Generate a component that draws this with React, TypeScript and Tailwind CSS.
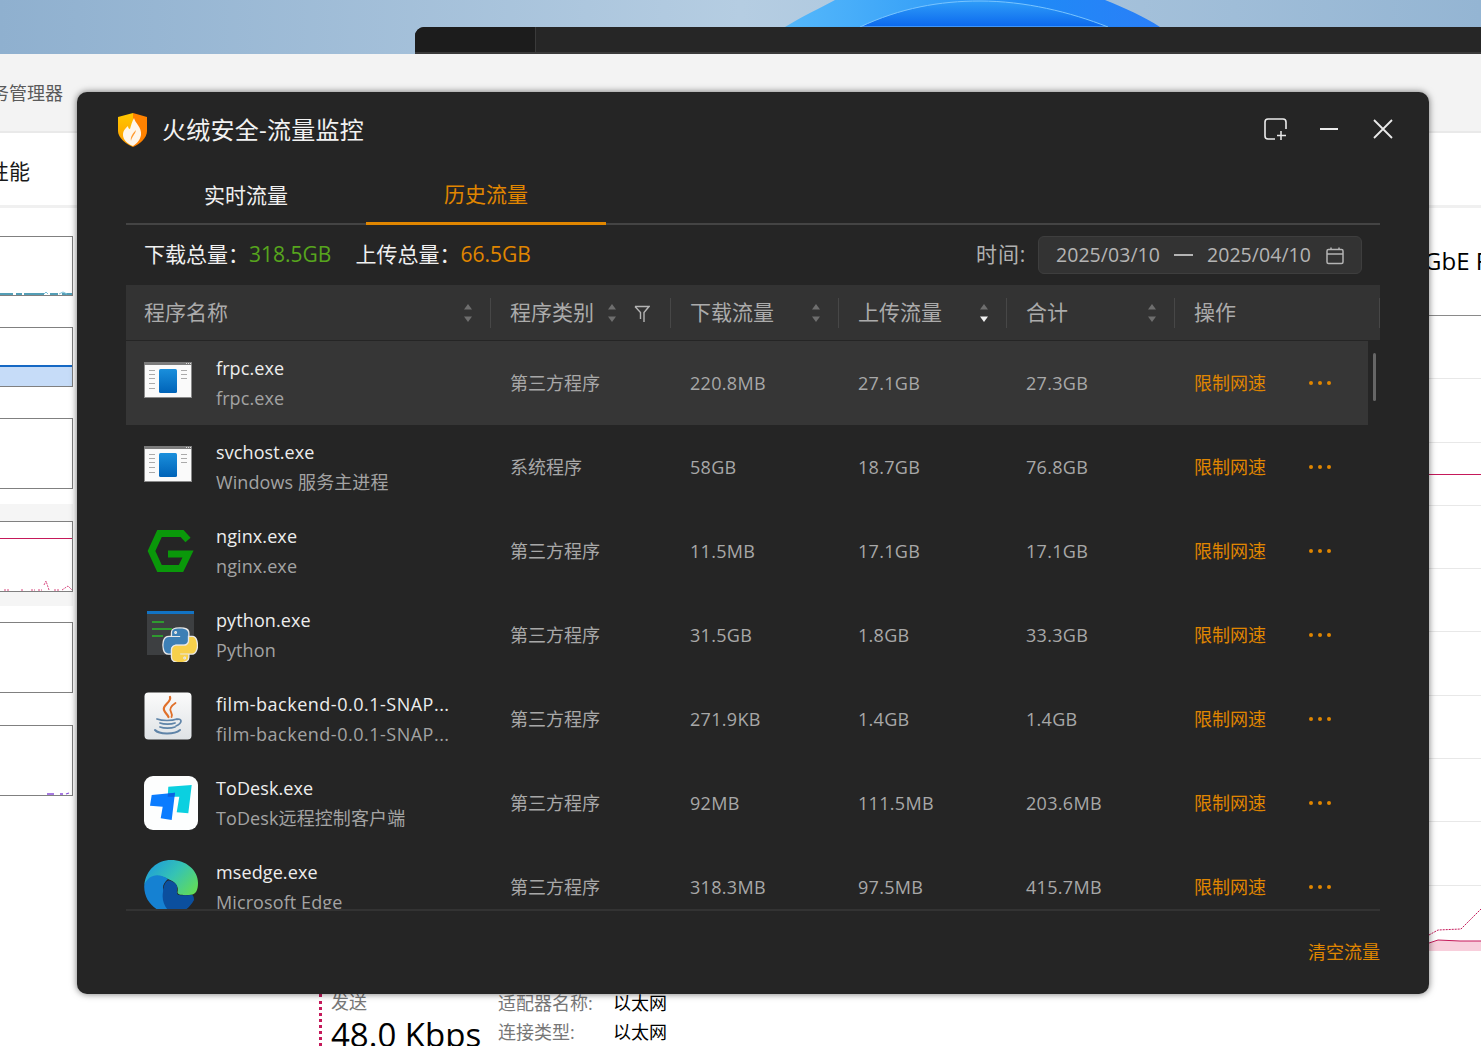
import { useId } from "react";

const FONT = { fontFamily: '"Open Sans", "Noto Sans CJK SC", sans-serif' };

type Row = {
  name: string;
  desc: string;
  kind: string;
  down: string;
  up: string;
  total: string;
  icon: "win" | "nginx" | "python" | "java" | "todesk" | "edge";
};

const ROWS: Row[] = [
  { name: "frpc.exe", desc: "frpc.exe", kind: "第三方程序", down: "220.8MB", up: "27.1GB", total: "27.3GB", icon: "win" },
  { name: "svchost.exe", desc: "Windows 服务主进程", kind: "系统程序", down: "58GB", up: "18.7GB", total: "76.8GB", icon: "win" },
  { name: "nginx.exe", desc: "nginx.exe", kind: "第三方程序", down: "11.5MB", up: "17.1GB", total: "17.1GB", icon: "nginx" },
  { name: "python.exe", desc: "Python", kind: "第三方程序", down: "31.5GB", up: "1.8GB", total: "33.3GB", icon: "python" },
  { name: "film-backend-0.0.1-SNAP...", desc: "film-backend-0.0.1-SNAP...", kind: "第三方程序", down: "271.9KB", up: "1.4GB", total: "1.4GB", icon: "java" },
  { name: "ToDesk.exe", desc: "ToDesk远程控制客户端", kind: "第三方程序", down: "92MB", up: "111.5MB", total: "203.6MB", icon: "todesk" },
  { name: "msedge.exe", desc: "Microsoft Edge", kind: "第三方程序", down: "318.3MB", up: "97.5MB", total: "415.7MB", icon: "edge" },
];

function AppIcon({ type }: { type: Row["icon"] }) {
  const id = useId();
  if (type === "win") {
    return (
      <svg width="54" height="54" viewBox="0 0 54 54">
        <rect x="0.5" y="6.5" width="47" height="35" fill="#fafafa" stroke="#8a8a8a" />
        <rect x="0" y="6" width="48" height="3" fill="#7c7c7c" />
        <rect x="42" y="7" width="1" height="1" fill="#ddd" />
        <rect x="44" y="7" width="1" height="1" fill="#ddd" />
        <rect x="46" y="7" width="1" height="1" fill="#ddd" />
        <defs>
          <linearGradient id={id} x1="0" y1="0" x2="0" y2="1">
            <stop offset="0" stopColor="#1a8fdc" />
            <stop offset="1" stopColor="#0063b8" />
          </linearGradient>
        </defs>
        <rect x="15" y="13" width="18" height="24" rx="1.5" fill={`url(#${id})`} />
        {[14, 18, 22, 27, 32].map((y) => (
          <rect key={y} x="5" y={y} width="6" height="1" fill="#aaa" />
        ))}
        {[14, 18, 22].map((y) => (
          <rect key={y} x="37" y={y} width="6" height="1" fill="#aaa" />
        ))}
      </svg>
    );
  }
  if (type === "nginx") {
    return (
      <svg width="54" height="54" viewBox="0 0 54 54">
        <path
          d="M44 16 L38 9.5 H15.5 L7.5 27 L15.5 44.5 H37 L44 30 H24"
          fill="none"
          stroke="#0a980a"
          strokeWidth="7"
        />
      </svg>
    );
  }
  if (type === "python") {
    return (
      <svg width="54" height="54" viewBox="0 0 54 54">
        <rect x="3" y="3" width="47" height="44" fill="#3d3f41" />
        <rect x="3" y="3" width="47" height="3" fill="#1273c4" />
        <rect x="8" y="13" width="12" height="2" fill="#2f9a2f" />
        <rect x="8" y="20" width="20" height="2" fill="#2f9a2f" />
        <rect x="8" y="27" width="11" height="2" fill="#2f9a2f" />
        <g transform="translate(19.5 20.5) scale(0.3)">
          <path
            d="M54.9 0C50.3 0 46 .4 42.1 1.1 30.8 3.1 28.7 7.3 28.7 15v10.2h26.8v3.4H18.6c-7.8 0-14.6 4.7-16.7 13.6-2.5 10.2-2.6 16.6 0 27.3 1.9 7.9 6.5 13.6 14.2 13.6h9.2V71c0-8.8 7.7-16.7 16.8-16.7h26.8c7.4 0 13.4-6.1 13.4-13.6V15.2c0-7.3-6.1-12.7-13.4-13.9C64.3.3 59.5 0 54.9 0Zm-14.5 8.2c2.8 0 5 2.3 5 5.1s-2.2 5.1-5 5.1-5-2.3-5-5.1 2.2-5.1 5-5.1Z"
            fill="#3d7fb5"
            stroke="#e8e8e8"
            strokeWidth="9"
            paintOrder="stroke"
          />
          <path
            d="M85.6 28.7v11.9c0 9.2-7.8 17-16.7 17H42.1c-7.3 0-13.4 6.3-13.4 13.6v25.5c0 7.3 6.3 11.5 13.4 13.6 8.5 2.5 16.6 2.9 26.8 0 6.7-2 13.4-5.9 13.4-13.6V86.5H55.5v-3.4h40.2c7.8 0 10.7-5.4 13.4-13.6 2.8-8.4 2.7-16.5 0-27.3-1.9-7.8-5.6-13.6-13.4-13.6Zm-15.1 64.6c2.8 0 5 2.3 5 5.1s-2.2 5.1-5 5.1-5-2.3-5-5.1 2.2-5.1 5-5.1Z"
            fill="#f7d04b"
            stroke="#e8e8e8"
            strokeWidth="9"
            paintOrder="stroke"
          />
        </g>
      </svg>
    );
  }
  if (type === "java") {
    return (
      <svg width="54" height="54" viewBox="0 0 54 54">
        <defs>
          <linearGradient id={id} x1="0" y1="0" x2="0" y2="1">
            <stop offset="0" stopColor="#fbfbfb" />
            <stop offset="1" stopColor="#dfe3e6" />
          </linearGradient>
        </defs>
        <rect x="0.5" y="0.5" width="47" height="47" rx="4" fill={`url(#${id})`} />
        <g fill="none" stroke="#e0702a" strokeLinecap="round">
          <path d="M26 5 C28 10 18 13 20 18 C21 21 23 22 24.5 25" strokeWidth="2.2" />
          <path d="M31.5 11 C27 14 25 17 27 20 C28 22 28 24 27.5 25" strokeWidth="1.8" />
        </g>
        <g fill="none" stroke="#5f84a8" strokeWidth="1.7" strokeLinecap="round">
          <path d="M13 27 C18 29 28 29 33 27" />
          <path d="M16 31 C20 32.5 27 32.5 31 31" />
          <path d="M16 35 C20 36.5 27 36.5 31 35" />
          <path d="M33 27.5 C38 26 39 31 32 34" />
          <path d="M11 38 C15 42.5 30 43 36 38" strokeWidth="2" />
        </g>
      </svg>
    );
  }
  if (type === "todesk") {
    return (
      <svg width="54" height="54" viewBox="0 0 54 54">
        <rect width="54" height="54" rx="9" fill="#fdfefe" />
        <path d="M24.3 10.7 L47.7 9 L44.3 37.3 L32.7 36.3 L35.3 20.7 L23.7 20.7Z" fill="#0bd0e0" />
        <path d="M7.7 19 L31 16.7 L27.7 44 L16.7 42.3 L18.7 30.7 L6 29.7Z" fill="#0a7cff" />
        <path d="M24 17.4 L31 16.7 L30.3 20.7 L23.7 20.7Z" fill="#0a62e0" />
      </svg>
    );
  }
  return (
    <svg width="54" height="54" viewBox="0 0 54 54">
      <defs>
        <linearGradient id={id} x1="0" y1="0.2" x2="1" y2="0.8">
          <stop offset="0" stopColor="#1d9bdc" />
          <stop offset="0.5" stopColor="#35c3b4" />
          <stop offset="1" stopColor="#62dc58" />
        </linearGradient>
      </defs>
      <path d="M0.3 25 C2 10 13 0 27 0 C42 0 54 10 54 23 C54 30 52 34 47.7 34.7 C41 35.5 33 35.5 33.5 32 C35 27 32 22 24 19 C18 16 8 13 0.3 25Z" fill={`url(#${id})`} />
      <path d="M0.3 25 C4 15 14 12 24 19 C21 22 19 24 19 28 L26 49 C28 52 30 53 32 53.5 C15 56 -1 42 0.3 25Z" fill="#1581d2" />
      <path d="M24 20.5 C28 20.5 32 23 33 26 C33.5 30 32 33 34 34.7 C38 36 44 35 47.7 34.7 C49 35 50 36.5 50 40 C45 49 37 54 30 54 C23 52 17 42 19 32 C19.5 26 21 22 24 20.5Z" fill="#0b4f9e" />
    </svg>
  );
}

function Sort({ active }: { active?: boolean }) {
  return (
    <svg width="10" height="20" viewBox="0 0 10 20" className="shrink-0">
      <path d="M5 1 L9 6.5 H1Z" fill="#6e6e6e" />
      <path d="M5 19 L9 13.5 H1Z" fill={active ? "#f0f0f0" : "#6e6e6e"} />
    </svg>
  );
}

function HeadCell({
  label,
  first,
  active,
  filter,
  noSort,
}: {
  label: string;
  first?: boolean;
  active?: boolean;
  filter?: boolean;
  noSort?: boolean;
}) {
  return (
    <div className={`flex h-[30px] items-center border-r border-[#474747] ${first ? "pl-[18px]" : "pl-[19px]"}`}>
      <span className="mt-[-2px] text-[21px] leading-[30px] text-[#ababab]">{label}</span>
      <div className="ml-auto flex items-center">
        {!noSort && (
          <span className="mr-[17px]">
            <Sort active={active} />
          </span>
        )}
        {filter && (
          <svg width="16" height="18" viewBox="0 0 16 18" className="mr-[20px] mt-[3px]">
            <path d="M1 1.5 H15 L10 7.5 V17 M1 1.5 L6.5 7.5 V14" fill="none" stroke="#b4b4b4" strokeWidth="1.4" />
          </svg>
        )}
      </div>
    </div>
  );
}

function ChartBox({ h, children }: { h: string; children?: React.ReactNode }) {
  return <div className={`relative w-[73px] overflow-hidden border border-l-0 border-[#808080] bg-white ${h}`}>{children}</div>;
}

export default function App() {
  return (
    <div className="relative flex h-[1046px] w-[1481px] flex-col overflow-hidden bg-white" style={FONT}>
      {/* wallpaper */}
      <div className="relative h-[54px] shrink-0 overflow-hidden bg-gradient-to-r from-[#8fb0cf] via-[#b5cde2] to-[#94b5d3]">
        <svg width="1481" height="54" className="absolute left-0 top-0">
          <defs>
            <linearGradient id="swirl" x1="0" y1="0" x2="1" y2="0">
              <stop offset="0" stopColor="#55b8fb" />
              <stop offset="0.35" stopColor="#3aa3f8" />
              <stop offset="0.65" stopColor="#1f8af6" />
              <stop offset="1" stopColor="#2a7ff8" />
            </linearGradient>
            <linearGradient id="swirlIn" x1="0" y1="0" x2="0" y2="1">
              <stop offset="0" stopColor="#2f9df8" />
              <stop offset="1" stopColor="#0b68ee" />
            </linearGradient>
          </defs>
          <path d="M785 27 C805 15 820 8 835 0 H1105 C1125 8 1145 17 1160 27 V54 H785Z" fill="url(#swirl)" />
          <path d="M860 27 C900 8 940 1 980 1 C1025 1 1070 12 1108 27Z" fill="url(#swirlIn)" stroke="#78c4ff" strokeWidth="1" />
        </svg>
        <div className="absolute bottom-0 left-[415px] right-0 flex h-[27px] overflow-hidden rounded-tl-[9px] border-b-2 border-[#3a3a3a] bg-[#262626]">
          <div className="w-[120px] bg-[#1c1c1c]" />
          <div className="w-px bg-[#3a3a3a]" />
        </div>
      </div>

      {/* task manager window behind */}
      <div className="flex h-[79px] shrink-0 items-center border-b-2 border-[#e9e9e9] bg-[#f3f3f3]">
        <span className="ml-[-27px] mt-[2px] text-[18px] text-[#5a5a5a]">任务管理器</span>
      </div>
      <div className="flex h-[75px] shrink-0 items-center border-b-[3px] border-[#f0f0f0] bg-white">
        <span className="ml-[-12px] mt-[5px] text-[21px] text-[#1a1a1a]">性能</span>
      </div>

      <div className="flex min-h-0 flex-1">
        <div className="flex w-[73px] shrink-0 flex-col pt-[28px]">
          <ChartBox h="h-[60px]">
            <svg width="72" height="4" className="absolute bottom-0 left-0">
              <path d="M0 3 H13 M16 3 H22 M24 3 H44 M50 3 H58 M62 3 H72" fill="none" stroke="#1d7f9e" strokeWidth="1.5" />
              <path d="M44 3 L46 1 L48 3 M59 3 L63 1 L67 3" fill="none" stroke="#7cc0d8" strokeWidth="1" />
            </svg>
          </ChartBox>
          <div className="mt-[31px]">
            <ChartBox h="h-[60px]">
              <div className="absolute bottom-0 left-0 h-[21px] w-full border-t-2 border-[#1568c4] bg-[#c6dcf8]" />
            </ChartBox>
          </div>
          <div className="mt-[31px]">
            <ChartBox h="h-[71px]" />
          </div>
          <div className="mt-[15px] bg-[#f5f5f5] pb-[14px] pt-[17px]">
            <ChartBox h="h-[71px]">
              <div className="absolute left-0 top-[16px] h-px w-full bg-[#c5195a]" />
              <svg width="72" height="12" className="absolute bottom-0 left-0">
                <path d="M4 11 H9 M21 11 H24 M31 11 H35 M38 11 H42 M44 6 L46 2 L49 11 M54 11 H60 M62 11 L68 7 L72 11" fill="none" stroke="#d8487f" strokeWidth="1" strokeDasharray="2 1" />
              </svg>
            </ChartBox>
          </div>
          <div className="mt-[16px]">
            <ChartBox h="h-[71px]" />
          </div>
          <div className="mt-[32px]">
            <ChartBox h="h-[71px]">
              <svg width="72" height="10" className="absolute bottom-0 left-0">
                <path d="M47 9 H54 M60 9 H63 M66 9 L69 8 M74 9 L77 4 L80 9" fill="none" stroke="#8a4fd8" strokeWidth="1.3" />
              </svg>
            </ChartBox>
          </div>
        </div>

        <div className="flex min-w-0 flex-1 flex-col justify-end">
          <div className="ml-[246px] flex h-[52px] border-l-[3px] border-dotted border-[#c5195a] pl-[9px]">
            <div className="w-[167px]">
              <div className="text-[18px] leading-[17px] text-[#777]">发送</div>
              <div className="mt-[4px] whitespace-nowrap text-[33px] leading-[40px] text-black">48.0 Kbps</div>
            </div>
            <div className="w-[115px] text-[18px] leading-[29px] text-[#777]">
              <div className="mt-[-5px]">适配器名称:</div>
              <div>连接类型:</div>
            </div>
            <div className="text-[18px] leading-[29px] text-black">
              <div className="mt-[-5px]">以太网</div>
              <div>以太网</div>
            </div>
          </div>
        </div>

        <div className="flex w-[61px] shrink-0 flex-col overflow-hidden pt-[37px]">
          <div className="h-[32px] whitespace-nowrap pl-[4px] text-[24px] leading-[32px] text-black">GbE Family</div>
          <div className="relative mt-[38px] flex h-[635px] flex-col border-y border-[#8a8a8a]">
            {Array.from({ length: 10 }).map((_, i) => (
              <div key={i} className="flex-1 border-b border-[#e8e8e8] last:border-b-0" />
            ))}
            <svg width="61" height="635" className="absolute left-0 top-0">
              <path d="M9 158.5 H61" stroke="#c5195a" strokeWidth="1" />
              <path d="M9 627 L18 624 L40 625 H61 V635 H9Z" fill="#f8cfdc" />
              <path d="M9 627 L18 624 L40 625 H61" fill="none" stroke="#c5195a" strokeWidth="1" />
              <path d="M9 619 L18 614 L41 613 L61 593" fill="none" stroke="#c5195a" strokeWidth="1" strokeDasharray="2 1" />
            </svg>
          </div>
        </div>
      </div>

      {/* traffic monitor dialog */}
      <div className="absolute left-[77px] top-[92px] flex h-[902px] w-[1352px] flex-col rounded-[10px] bg-[#252525] shadow-[0_0_7px_rgba(0,0,0,0.55)]">
        <div className="flex h-[76px] shrink-0 items-center pl-[41px] pr-[34px]">
          <svg width="30" height="34" viewBox="0 0 30 34">
            <defs>
              <linearGradient id="shieldL" x1="0" y1="0" x2="0" y2="1">
                <stop offset="0" stopColor="#ffc800" />
                <stop offset="1" stopColor="#ff9a00" />
              </linearGradient>
            </defs>
            <path d="M15 0 L0 4 V18 C0 25 8 31 15 34Z" fill="url(#shieldL)" />
            <path d="M15 0 L29 4 V18 C29 25 22 31 15 34Z" fill="#ff8200" />
            <path d="M16 5 C17 10 24 14 23 22 C22 28 18 31 15 33 C10 31 5 27 5 22 C5 17 8 15 10 13 C10 15 11 16 12 16 C13 12 14 9 16 5Z" fill="#fff6ea" />
            <path d="M18 17 C17 22 14 23 13 28 C12 24 15 20 18 17Z" fill="#ff9a30" />
          </svg>
          <h1 className="ml-[14px] text-[24px] font-normal leading-none tracking-[0.25px] text-[#f2f2f2]">火绒安全-流量监控</h1>
          <div className="ml-auto flex items-center gap-[30px]">
            <svg width="24" height="24" viewBox="0 0 24 24" fill="none" stroke="#eaeaea" strokeWidth="1.6" className="mt-[-2px]">
              <path d="M12 22 H5 C3 22 2 21 2 19 V5 C2 3 3 2 5 2 H20 C22 2 23 3 23 5 V12" />
              <path d="M18 14 V23 M14 18.5 H23" strokeWidth="1.5" />
            </svg>
            <svg width="24" height="24" viewBox="0 0 24 24" fill="none" stroke="#eaeaea" strokeWidth="2" className="mt-[-2px]">
              <path d="M3 12 H21" />
            </svg>
            <svg width="24" height="24" viewBox="0 0 24 24" fill="none" stroke="#eaeaea" strokeWidth="1.8" className="mt-[-2px]">
              <path d="M3 3 L21 21 M21 3 L3 21" />
            </svg>
          </div>
        </div>

        <div className="mx-[49px] flex min-h-0 flex-1 flex-col">
          <div className="flex h-[57px] shrink-0 border-b-2 border-[#444]">
            <div className="flex w-[240px] items-center justify-center text-[21px] text-[#f0f0f0]">实时流量</div>
            <div className="mb-[-2px] flex w-[240px] items-center justify-center border-b-[3px] border-[#e08600] text-[21px] text-[#e08600]">历史流量</div>
          </div>

          <div className="flex h-[60px] shrink-0 items-center pl-[18px] pr-[18px] text-[21px] text-[#f0f0f0]">
            <span>下载总量：</span>
            <span className="text-[#57a51d]">318.5GB</span>
            <span className="ml-[24px]">上传总量：</span>
            <span className="text-[#e08600]">66.5GB</span>
            <span className="ml-auto mr-[12px] text-[21px] tracking-[0.8px] text-[#b0b0b0]">时间:</span>
            <div className="flex h-[38px] w-[324px] items-center rounded-[6px] border border-[#3e3e3e] bg-[#333] pl-[17px] text-[19.5px] tracking-[0.05px] text-[#b4b4b4]">
              <span>2025/03/10</span>
              <span className="ml-[14px] h-[2px] w-[19px] bg-[#b4b4b4]" />
              <span className="ml-[14px]">2025/04/10</span>
              <svg width="20" height="20" viewBox="0 0 20 20" fill="none" stroke="#b4b4b4" strokeWidth="1.5" className="ml-[14px] mt-[2px]">
                <rect x="2" y="3.5" width="16" height="14" rx="1.5" />
                <path d="M2 8 H18 M6 1.5 V4 M14 1.5 V4" />
              </svg>
            </div>
          </div>

          <div className="grid h-[55px] shrink-0 grid-cols-[365px_180px_168px_168px_168px_205px] items-center bg-[#333]">
            <HeadCell label="程序名称" first />
            <HeadCell label="程序类别" filter />
            <HeadCell label="下载流量" />
            <HeadCell label="上传流量" active />
            <HeadCell label="合计" />
            <HeadCell label="操作" noSort />
          </div>

          <div className="relative mt-px h-[570px] shrink-0 overflow-hidden border-b-2 border-[#333]">
            {ROWS.map((row, i) => (
              <div
                key={row.name}
                className={`grid h-[84px] w-[1242px] grid-cols-[365px_180px_168px_168px_168px_193px] items-center ${i === 0 ? "bg-[#363636]" : ""}`}
              >
                <div className="flex items-center pl-[18px]">
                  <span className="h-[54px] w-[54px] shrink-0">
                    <AppIcon type={row.icon} />
                  </span>
                  <div className={`ml-[18px] w-[240px] whitespace-nowrap text-[18px] leading-[30px] ${row.icon === "java" ? "tracking-[0.5px]" : "tracking-[0.1px]"}`}>
                    <div className="text-[#ededed]">{row.name}</div>
                    <div className="text-[#a3a3a3]">{row.desc}</div>
                  </div>
                </div>
                <div className="pl-[19px] text-[18px] text-[#a8a8a8]">{row.kind}</div>
                <div className="pl-[19px] text-[18px] tracking-[0.3px] text-[#a8a8a8]">{row.down}</div>
                <div className="pl-[19px] text-[18px] tracking-[0.3px] text-[#a8a8a8]">{row.up}</div>
                <div className="pl-[19px] text-[18px] tracking-[0.3px] text-[#a8a8a8]">{row.total}</div>
                <div className="flex items-center pl-[19px] text-[18px] text-[#e08600]">
                  <span>限制网速</span>
                  <span className="ml-[43px] flex gap-[5px]">
                    <span className="h-1 w-1 rounded-full bg-[#e08600]" />
                    <span className="h-1 w-1 rounded-full bg-[#e08600]" />
                    <span className="h-1 w-1 rounded-full bg-[#e08600]" />
                  </span>
                </div>
              </div>
            ))}
            <div className="absolute left-[1247px] top-[12px] h-[48px] w-[3px] rounded-full bg-[#666]" />
          </div>

          <div className="flex flex-1 items-center justify-end">
            <span className="text-[18px] text-[#e08600]">清空流量</span>
          </div>
        </div>
      </div>
    </div>
  );
}
